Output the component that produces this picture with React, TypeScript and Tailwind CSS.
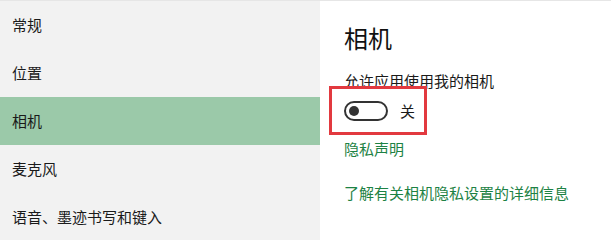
import { useState } from "react";

const navItems = ["常规", "位置", "相机", "麦克风", "语音、墨迹书写和键入"];

export default function App() {
  const [selected, setSelected] = useState("相机");
  const [enabled, setEnabled] = useState(false);

  return (
    <div
      className="flex h-[240px] w-[611px] overflow-hidden border-t border-[#e6e6e6] text-black"
      style={{ fontFamily: '"Noto Sans CJK SC", "Noto Sans", sans-serif' }}
    >
      {/* Sidebar */}
      <div className="flex w-[320px] shrink-0 flex-col bg-[#f2f2f2]">
        {navItems.map((item) => (
          <button
            key={item}
            onClick={() => setSelected(item)}
            className={`flex h-12 shrink-0 items-center px-3 text-left text-[15px] text-[#1a1a1a] ${
              selected === item ? "bg-[#9bc9a9]" : ""
            }`}
          >
            {item}
          </button>
        ))}
      </div>

      {/* Content */}
      <div className="relative flex-1 bg-white pl-6">
        <h1 className="pt-[21px] text-[24px] leading-[32px] text-[#111]">相机</h1>
        <p className="mt-[17px] text-[15px] leading-[20px] text-[#1a1a1a]">允许应用使用我的相机</p>

        <div className="mt-[10px] flex h-5 items-center gap-3">
          <button
            onClick={() => setEnabled(!enabled)}
            className={`flex h-5 w-11 items-center rounded-full border-2 px-[3px] ${
              enabled ? "justify-end border-[#1a8040] bg-[#1a8040]" : "border-[#333] bg-white"
            }`}
          >
            <span className={`h-[10px] w-[10px] rounded-full ${enabled ? "bg-white" : "bg-[#333]"}`} />
          </button>
          <span className="text-[15px] leading-[20px] text-[#1a1a1a]">{enabled ? "开" : "关"}</span>
        </div>

        <a className="mt-[18px] block text-[15px] leading-[20px] text-[#1d8244]">隐私声明</a>
        <a className="mt-[24px] block text-[15px] leading-[20px] text-[#1d8244]">
          了解有关相机隐私设置的详细信息
        </a>

        {/* Annotation highlight */}
        <div className="pointer-events-none absolute left-[9px] top-[85px] h-[49px] w-[98px] border-[3px] border-[#e2393f]" />
      </div>
    </div>
  );
}
